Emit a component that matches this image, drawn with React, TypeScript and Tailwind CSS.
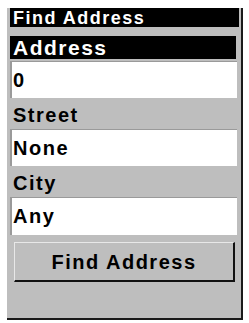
export default function App() {
  const font = { fontFamily: '"Liberation Sans", Arial, sans-serif' };
  return (
    <div className="w-[249px] h-[323px] bg-white pt-[8px] pl-[7px]" style={font}>
      <div className="w-[236px] h-[312px] bg-[#bebebe] border-r-2 border-b-2 border-[#1a1a1a] pl-[3px] flex flex-col">
        <div className="w-[229px] h-[19px] bg-black text-white font-bold text-[18px] leading-[19px] tracking-[1.5px] pl-[3px] pt-px">
          Find Address
        </div>
        <div className="mt-[9px] w-[226px] h-[23px] bg-black text-white font-bold text-[21px] leading-[23px] tracking-[1.5px] pl-[3px]">
          Address
        </div>
        <Field value="0" className="mt-[2px]" />
        <Label text="Street" />
        <Field value="None" />
        <Label text="City" />
        <Field value="Any" className="h-[38px]" />
        <div className="mt-[7px] ml-[4px] w-[221px] h-[40px] border-t border-l border-[#e8e8e8] border-r-2 border-b-2 border-r-[#111] border-b-[#111] flex items-center justify-center font-bold text-[20px] tracking-[1.5px] text-black">
          Find Address
        </div>
      </div>
    </div>
  );
}

function Field({ value, className = "" }: { value: string; className?: string }) {
  return (
    <div
      className={`w-[227px] h-[37px] bg-white border-l-2 border-t border-[#9a9a9a] pl-[1px] pt-[2px] font-bold text-[20px] leading-[33px] tracking-[1.5px] text-black ${className}`}
    >
      {value}
    </div>
  );
}

function Label({ text }: { text: string }) {
  return (
    <div className="h-[31px] pl-[3px] pt-[3px] font-bold text-[20px] leading-[28px] tracking-[1.5px] text-black">
      {text}
    </div>
  );
}
